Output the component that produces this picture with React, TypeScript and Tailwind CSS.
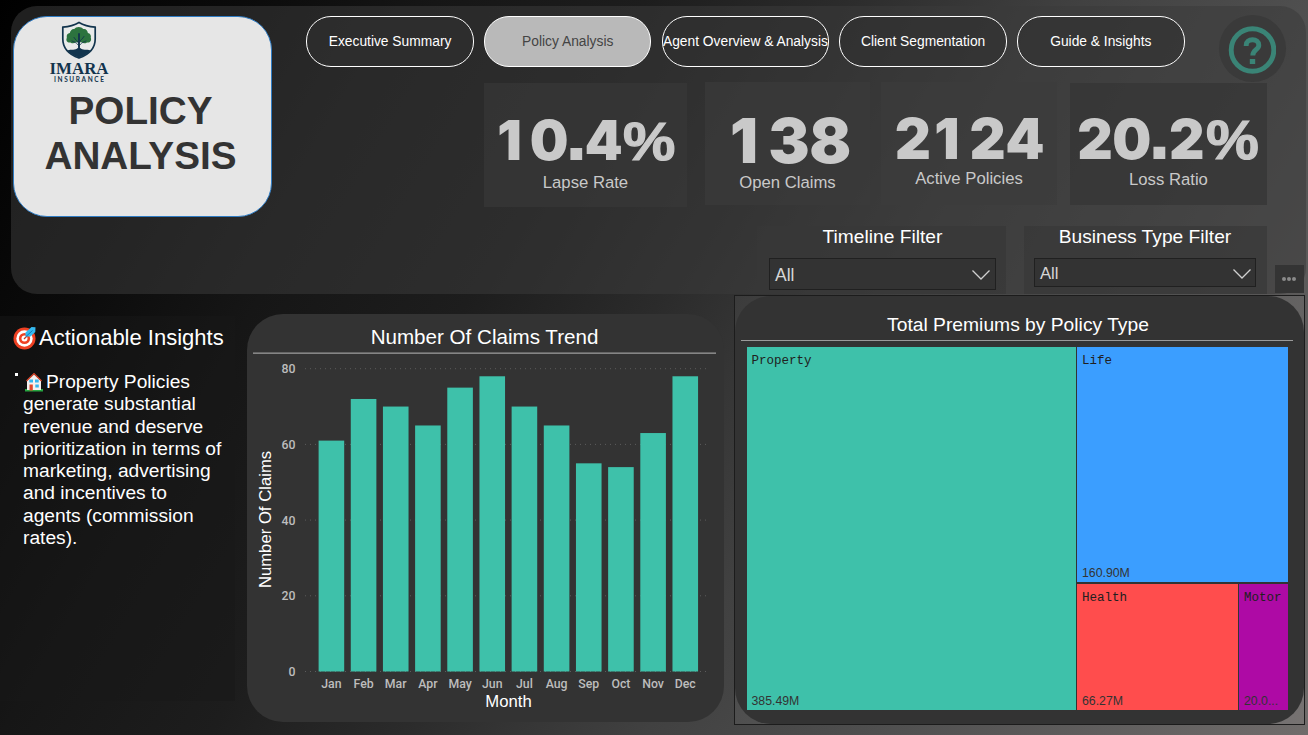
import React from "react";

const NAV = ["Executive Summary", "Policy Analysis", "Agent Overview & Analysis", "Client Segmentation", "Guide & Insights"];

const CLAIMS: [string, number][] = [
  ["Jan", 61], ["Feb", 72], ["Mar", 70], ["Apr", 65], ["May", 75], ["Jun", 78],
  ["Jul", 70], ["Aug", 65], ["Sep", 55], ["Oct", 54], ["Nov", 63], ["Dec", 78],
];

const INSIGHT_LINES = [
  "generate substantial",
  "revenue and deserve",
  "prioritization in terms of",
  "marketing, advertising",
  "and incentives to",
  "agents (commission",
  "rates).",
];

function Logo() {
  return (
    <svg className="mx-auto block overflow-visible" width="62" height="66" viewBox="0 0 62 66">
      <path d="M31 1.6C26 4.600 20.500 5.800 14.800 6.200V18C14.800 27 21 33.500 31 37C41 33.500 47.200 27 47.200 18V6.200C41.500 5.800 36 4.600 31 1.600Z" fill="#e9ebea" stroke="#12344d" strokeWidth="1.700" />
      <path d="M22.500 21.500c-3 .6-5-2-3.700-4.600-.6-2.900 1-4.700 3-4.800.5-2.800 2.600-4.600 4.500-4 1.500-2.800 7-3.100 9 0 2.300-.7 4.300 1.200 4.600 4 2.300.3 3.500 2.500 2.900 4.700 1.100 2.900-.8 5.200-3.800 4.700-2 1.300-4 1-5.300-.2h-6c-1.500 1.200-3.400 1.500-5.200.2Z" fill="#2c733e" />
      <g stroke="#12344d" fill="none" strokeLinecap="round">
        <path d="M31 13v18" strokeWidth="1.900" />
        <path d="M31 23c-1-3.500-4-4-5-6.500M31 22c1-3.500 4-4 5-6.500M31 25c-2-3.500-5-4-7-5M31 25c2-3.500 5-4 7-5" strokeWidth="0.900" />
      </g>
      <path d="M19.500 29.500c4-1.500 8 0 10.300-2.500h2.400c2.300 2.500 6.300 1 10.300 2.500-2.500 3.200-6.500 5.400-11.500 7-5-1.600-9-3.800-11.500-7Z" fill="#12344d" />
      <text x="31" y="52.600" textAnchor="middle" textLength="59" lengthAdjust="spacingAndGlyphs" fontFamily="Liberation Serif, serif" fontWeight="700" fontSize="17.500" fill="#12344d">IMARA</text>
      <text x="31" y="61.300" textAnchor="middle" textLength="50" fontFamily="Lato, sans-serif" fontWeight="700" fontSize="6.500" fill="#12344d">INSURANCE</text>
    </svg>
  );
}

function Dart() {
  return (
    <svg className="shrink-0" width="24" height="24" viewBox="0 0 24 24">
      <circle cx="11.500" cy="12.500" r="11" fill="#ef4123" />
      <circle cx="11.500" cy="12.500" r="8.200" fill="#fff" />
      <circle cx="11.500" cy="12.500" r="5.600" fill="#ef4123" />
      <circle cx="11.500" cy="12.500" r="3" fill="#fff" />
      <path d="M11 13L16 8" stroke="#c43a2a" strokeWidth="1.300" />
      <path d="M12.500 10.500V6.500L18.500 1l4 .3-.2 4.700-4.800 4.500Z" fill="#35b9f0" />
      <path d="M13 10.500l6.500-6" stroke="#1477b8" strokeWidth="1" />
    </svg>
  );
}

function House() {
  return (
    <svg className="mr-[3px] shrink-0" width="18" height="20" viewBox="0 0 18 20">
      <rect x="0" y="17" width="18" height="2.500" fill="#26a641" />
      <path d="M2 9L9 2.500L16 9V18H2Z" fill="#f5f0ee" />
      <path d="M1.500 9L9 1.500L16.500 9" fill="none" stroke="#e0482c" strokeWidth="1.200" />
      <rect x="4.300" y="7.500" width="3.700" height="3" fill="#35b6ee" />
      <rect x="10" y="7.500" width="3.700" height="3" fill="#35b6ee" />
      <rect x="10.300" y="12.500" width="3.500" height="3" fill="#35b6ee" />
      <rect x="4.500" y="12.500" width="3.300" height="6" fill="#e0482c" />
    </svg>
  );
}

function glyphClass(ch: string) {
  if (ch === ".") return "w-[0.333em] font-['Liberation_Sans',sans-serif] font-bold [-webkit-text-stroke:4px_#c9c9c9] -translate-y-[2px]";
  if (ch === "%") return "w-[1em] font-['Liberation_Sans',sans-serif] font-bold scale-x-[1.08] [-webkit-text-stroke:1.2px_#c9c9c9]";
  if (ch === "1") return "w-[0.667em] font-['Inter',sans-serif] font-black -translate-x-[0.06em]";
  return "w-[0.667em] font-['Inter',sans-serif] font-black";
}

function Kpi({ value, label, card, num }: { value: string; label: string; card: string; num: string }) {
  return (
    <div className={`flex flex-col items-center whitespace-nowrap text-[#c9c9c9] ${card}`}>
      <div className={`flex items-baseline ${num}`}>
        {value.split("").map((ch, i) => (
          <span key={i} className={`flex justify-center ${glyphClass(ch)}`}>{ch}</span>
        ))}
      </div>
      <span className="text-[16.7px] leading-[20px]">{label}</span>
    </div>
  );
}

function Chevron() {
  return (
    <svg width="20" height="12" viewBox="0 0 20 12">
      <path d="M1.500 1.500L10 10L18.500 1.500" fill="none" stroke="#d0d0d0" strokeWidth="1.300" />
    </svg>
  );
}

function ClaimsChart() {
  const y = (v: number) => 357.5 - v * 3.785;
  return (
    <svg className="block" width="477" height="408" viewBox="0 0 477 408" fontFamily="Liberation Sans, Arial, sans-serif">
      <text x="237.500" y="30" textAnchor="middle" fontSize="20.600" fill="#fff">Number Of Claims Trend</text>
      <rect x="6" y="38.500" width="463" height="1.300" fill="#9a9a9a" />
      {[0, 20, 40, 60, 80].map((v) => (
        <g key={v}>
          <line x1="58" x2="463" y1={y(v)} y2={y(v)} stroke="#5c5c5c" strokeDasharray="1 4" />
          <text x="48.500" y={y(v) + 4.4} textAnchor="end" fontFamily="Roboto, sans-serif" fontWeight="500" fontSize="12.300" fill="#bdbdbd">{v}</text>
        </g>
      ))}
      {CLAIMS.map(([m, v], i) => (
        <g key={m}>
          <rect x={71.6 + i * 32.17} y={y(v)} width="25.600" height={v * 3.785} fill="#3ec1aa" />
          <text x={84.4 + i * 32.17} y="374" textAnchor="middle" fontFamily="Roboto, sans-serif" fontWeight="500" fontSize="12.300" fill="#bdbdbd">{m}</text>
        </g>
      ))}
      <text x="261.500" y="393" textAnchor="middle" fontSize="16.700" fill="#fff">Month</text>
      <text transform="translate(24 205.500) rotate(-90)" textAnchor="middle" fontSize="16.700" fill="#fff">Number Of Claims</text>
    </svg>
  );
}

function Tile({ name, value, className }: { name: string; value: string; className: string }) {
  return (
    <div className={`flex flex-col justify-between overflow-hidden whitespace-nowrap pl-[5px] pt-[7px] pb-[1px] ${className}`}>
      <span className="font-['Liberation_Mono',monospace] text-[12.5px] leading-[15px] text-[#202020]">{name}</span>
      <span className="text-[12.3px] leading-[15px] text-[#333]">{value}</span>
    </div>
  );
}

export default function App() {
  return (
    <div className="flex h-[735px] w-[1308px] flex-col overflow-hidden bg-[linear-gradient(120.7deg,#000_0%,#0b0b0b_14%,#161616_25%,#1d1d1d_37%,#2b2b2b_48%,#414141_62%,#505050_76%,#706c6b_100%)] font-['Liberation_Sans',Arial,sans-serif] text-white">
      <header className="ml-[11px] mt-[6px] flex h-[288px] w-[1295px] shrink-0 rounded-[26px] bg-[#3a3a3a]/55">
        <div className="ml-[2px] mt-[10px] h-[201px] w-[259px] shrink-0 rounded-[34px] border border-[#2f7cc4] bg-[#e6e6e6] pt-[4px]">
          <div className="mr-[127px]">
            <Logo />
          </div>
          <h1 className="mt-px pr-[4px] text-center text-[38.7px] font-bold leading-[45px] text-[#333]">
            POLICY<br />ANALYSIS
          </h1>
        </div>

        <div className="ml-[34.3px] flex flex-col">
          <nav className="mt-[10px] flex h-[51px] items-start gap-[10.2px]">
            {NAV.map((n, i) => (
              <button
                key={n}
                className={`flex h-[51px] w-[167.5px] shrink-0 items-center justify-center whitespace-nowrap rounded-[25px] border border-white pt-[2px] text-[13.8px] ${i === 1 ? "bg-[#b9b9b9] text-[#444]" : "bg-[#303030]/60 text-white"}`}
              >
                {n}
              </button>
            ))}
            <div className="-mt-px ml-[24px] flex size-[67px] shrink-0 items-center justify-center rounded-full bg-[#3a3a3a]">
              <svg className="mt-[2px]" width="48" height="48" viewBox="0 0 48 48">
                <circle cx="24.500" cy="24" r="21.300" fill="none" stroke="#3a8476" strokeWidth="4.900" />
                <path d="M18.200 20v-.8c0-3.700 2.700-5.400 6.300-5.400s6.300 2 6.300 5.400c0 4.700-6 4.500-6 10.300" fill="none" stroke="#3a8476" strokeWidth="4.900" />
                <rect x="21.800" y="33" width="5.400" height="5" fill="#3a8476" />
              </svg>
            </div>
          </nav>

          <div className="ml-[177.7px] mt-[15px] flex h-[125px] items-start">
            <Kpi value="10.4%" label="Lapse Rate" card="mt-px h-[124px] w-[203px] bg-[#383838]/70 pt-[29px]" num="mb-[3px] text-[54.5px] leading-[56px]" />
            <Kpi value="138" label="Open Claims" card="ml-[18px] h-[123px] w-[165px] bg-[#3a3a3a]/70 pt-[28px]" num="mb-px ml-[3px] text-[62px] leading-[62px]" />
            <Kpi value="2124" label="Active Policies" card="ml-[11px] h-[123px] w-[176px] bg-[#3c3c3c]/70 pt-[29px]" num="mb-[2px] text-[56px] leading-[56px]" />
            <Kpi value="20.2%" label="Loss Ratio" card="ml-[13px] mt-px h-[122px] w-[197px] bg-[#363636]/75 pt-[28px]" num="mb-[2px] text-[55px] leading-[56px]" />
          </div>

          <div className="ml-[450.7px] mt-[19px] flex items-start">
            <div className="h-[68px] w-[249px] bg-[#383838]/70 pl-[12px] pr-[10px]">
              <h2 className="text-center text-[19.2px] leading-[22px]">Timeline Filter</h2>
              <div className="mt-[10px] flex h-[32px] items-center justify-between border border-[#202020] bg-[#333] pl-[5px] pr-[4px] pt-[2px] text-[17.5px] text-[#d6d6d6]">
                All <Chevron />
              </div>
            </div>
            <div className="ml-[18px] h-[68px] w-[243px] bg-[#383838]/70 pl-[10px] pr-[11px]">
              <h2 className="text-center text-[19.2px] leading-[22px]">Business Type Filter</h2>
              <div className="mt-[10px] flex h-[29px] items-center justify-between border border-[#202020] bg-[#333] pl-[5px] pr-[3px] pt-[2px] text-[16.7px] text-[#d6d6d6]">
                All <Chevron />
              </div>
            </div>
            <div className="ml-[8px] mt-[39px] flex h-[28px] w-[29px] items-center justify-center gap-[1px] bg-[#343434]">
              <i className="size-[4px] rounded-full bg-[#8a8a8a]" />
              <i className="size-[4px] rounded-full bg-[#8a8a8a]" />
              <i className="size-[4px] rounded-full bg-[#8a8a8a]" />
            </div>
          </div>
        </div>
      </header>

      <main className="flex items-start">
        <aside className="mt-[22px] h-[385px] w-[235px] shrink-0 bg-[#181818]/50 pt-[8px]">
          <h2 className="flex items-center gap-[2px] whitespace-nowrap pl-[13px] pt-px text-[22px] leading-[26px]">
            <Dart />
            Actionable Insights
          </h2>
          <div className="mt-[19px] flex pl-[15px] text-[19.2px] leading-[22.3px]">
            <i className="mt-[3px] size-[3px] shrink-0 bg-white" />
            <div className="whitespace-nowrap pl-[5px] pt-px">
              <div className="flex items-center pl-[2px]">
                <House />
                Property Policies
              </div>
              {INSIGHT_LINES.map((l) => (
                <div key={l}>{l}</div>
              ))}
            </div>
          </div>
        </aside>

        <section className="ml-[12px] mt-[20px] h-[408px] w-[477px] shrink-0 rounded-[36px] bg-[#333]">
          <ClaimsChart />
        </section>

        <section className="ml-[10px] mt-px h-[430px] w-[571px] shrink-0 border border-[#1c1c1c] bg-white/5">
          <div className="flex h-[428px] flex-col rounded-[36px] bg-[#333] pl-[11px] pr-[16px]">
            <h2 className="mt-[18px] pl-[2px] text-center text-[19.25px] leading-[22px]">Total Premiums by Policy Type</h2>
            <div className="-ml-[5px] -mr-[5px] mt-[4px] h-px shrink-0 bg-[#9a9a9a]" />
            <div className="ml-[0.5px] mt-[6px] flex h-[363px] gap-[1.5px]">
              <Tile name="Property" value="385.49M" className="w-[329px] bg-[#3ec1aa]" />
              <div className="flex flex-1 flex-col gap-[2px]">
                <Tile name="Life" value="160.90M" className="h-[235px] bg-[#3b9eff]" />
                <div className="flex flex-1 gap-[2px]">
                  <Tile name="Health" value="66.27M" className="w-[161px] bg-[#ff4d4d]" />
                  <Tile name="Motor" value="20.0..." className="-ml-px flex-1 bg-[#ae0aa5]" />
                </div>
              </div>
            </div>
          </div>
        </section>
      </main>
    </div>
  );
}
